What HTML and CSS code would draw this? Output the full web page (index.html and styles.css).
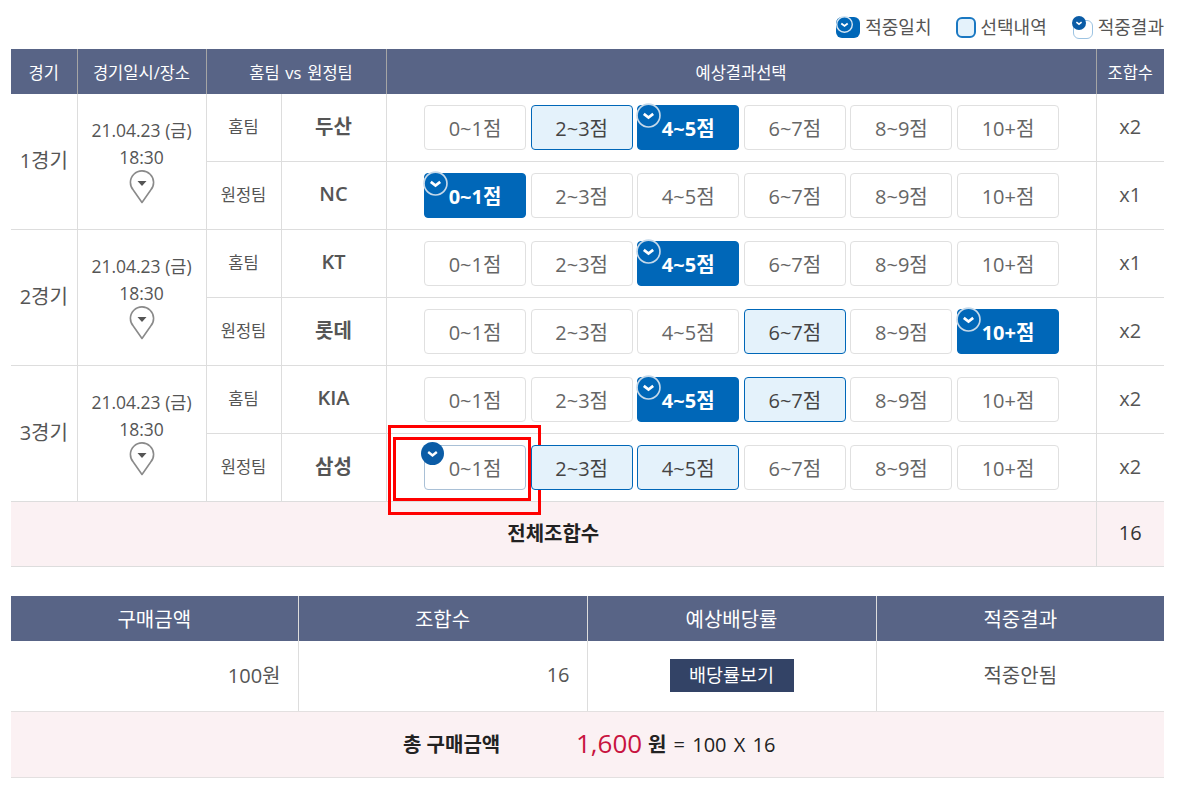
FILE: index.html
```html
<!DOCTYPE html>
<html lang="ko">
<head>
    <meta charset="UTF-8">
    <title>프로토 승부식</title>
    <link rel="stylesheet" href="styles.css">
</head>
<body>
    <div class="page">
        <div class="legend">
            <span class="legend-item"><i class="key key-match"><svg class="tick" viewBox="0 0 24 24"><circle cx="12" cy="12" r="11" fill="#0067b8" stroke="#d6e6f2" stroke-width="2"/><path d="M7.5 10.5l4.5 3.5 4.5-3.5" fill="none" stroke="#fff" stroke-width="2.6"/></svg></i>적중일치</span>
            <span class="legend-item"><i class="key key-pick"></i>선택내역</span>
            <span class="legend-item"><i class="key key-result"><svg class="tick" viewBox="0 0 24 24"><circle cx="12" cy="12" r="12" fill="#0b5ca6"/><path d="M7.5 10.5l4.5 3.5 4.5-3.5" fill="none" stroke="#fff" stroke-width="2.6"/></svg></i>적중결과</span>
        </div>

        <table class="game-table">
            <colgroup>
                <col class="c-game"><col class="c-date"><col class="c-side"><col class="c-team"><col class="c-pick"><col class="c-combo">
            </colgroup>
            <thead>
                <tr>
                    <th>경기</th>
                    <th>경기일시/장소</th>
                    <th colspan="2" class="th-teams">홈팀 vs 원정팀</th>
                    <th>예상결과선택</th>
                    <th>조합수</th>
                </tr>
            </thead>
            <tbody>
                <tr>
                    <td rowspan="2" class="game-no"><span>1경기</span></td>
                    <td rowspan="2" class="game-date">21.04.23 (금)<br>18:30<br><svg class="pin" viewBox="0 0 26 34"><path d="M13 32.5L4.6 20.5A11.6 11.6 0 1 1 21.4 20.5Z" fill="#fff" stroke="#8a8a8a" stroke-width="1.6" stroke-linejoin="round"/><path d="M8.5 11h9L13 16Z" fill="#555"/></svg></td>
                    <td class="side"><span>홈팀</span></td>
                    <td class="team"><span>두산</span></td>
                    <td class="picks"><div class="pick-row">
                        <span class="pick">0~1점</span><span class="pick chosen">2~3점</span><span class="pick hit">4~5점<svg class="tick" viewBox="0 0 24 24"><circle cx="12" cy="12" r="11" fill="#0067b8" stroke="#c5d9ea" stroke-width="1.6"/><path d="M7.5 10.5l4.5 3.5 4.5-3.5" fill="none" stroke="#fff" stroke-width="2.6"/></svg></span><span class="pick">6~7점</span><span class="pick">8~9점</span><span class="pick">10+점</span>
                    </div></td>
                    <td class="combo">x2</td>
                </tr>
                <tr class="group-end">
                    <td class="side"><span>원정팀</span></td>
                    <td class="team"><span>NC</span></td>
                    <td class="picks"><div class="pick-row">
                        <span class="pick hit">0~1점<svg class="tick" viewBox="0 0 24 24"><circle cx="12" cy="12" r="11" fill="#0067b8" stroke="#c5d9ea" stroke-width="1.6"/><path d="M7.5 10.5l4.5 3.5 4.5-3.5" fill="none" stroke="#fff" stroke-width="2.6"/></svg></span><span class="pick">2~3점</span><span class="pick">4~5점</span><span class="pick">6~7점</span><span class="pick">8~9점</span><span class="pick">10+점</span>
                    </div></td>
                    <td class="combo">x1</td>
                </tr>
                <tr>
                    <td rowspan="2" class="game-no"><span>2경기</span></td>
                    <td rowspan="2" class="game-date">21.04.23 (금)<br>18:30<br><svg class="pin" viewBox="0 0 26 34"><path d="M13 32.5L4.6 20.5A11.6 11.6 0 1 1 21.4 20.5Z" fill="#fff" stroke="#8a8a8a" stroke-width="1.6" stroke-linejoin="round"/><path d="M8.5 11h9L13 16Z" fill="#555"/></svg></td>
                    <td class="side"><span>홈팀</span></td>
                    <td class="team"><span>KT</span></td>
                    <td class="picks"><div class="pick-row">
                        <span class="pick">0~1점</span><span class="pick">2~3점</span><span class="pick hit">4~5점<svg class="tick" viewBox="0 0 24 24"><circle cx="12" cy="12" r="11" fill="#0067b8" stroke="#c5d9ea" stroke-width="1.6"/><path d="M7.5 10.5l4.5 3.5 4.5-3.5" fill="none" stroke="#fff" stroke-width="2.6"/></svg></span><span class="pick">6~7점</span><span class="pick">8~9점</span><span class="pick">10+점</span>
                    </div></td>
                    <td class="combo">x1</td>
                </tr>
                <tr class="group-end">
                    <td class="side"><span>원정팀</span></td>
                    <td class="team"><span>롯데</span></td>
                    <td class="picks"><div class="pick-row">
                        <span class="pick">0~1점</span><span class="pick">2~3점</span><span class="pick">4~5점</span><span class="pick chosen">6~7점</span><span class="pick">8~9점</span><span class="pick hit">10+점<svg class="tick" viewBox="0 0 24 24"><circle cx="12" cy="12" r="11" fill="#0067b8" stroke="#c5d9ea" stroke-width="1.6"/><path d="M7.5 10.5l4.5 3.5 4.5-3.5" fill="none" stroke="#fff" stroke-width="2.6"/></svg></span>
                    </div></td>
                    <td class="combo">x2</td>
                </tr>
                <tr>
                    <td rowspan="2" class="game-no"><span>3경기</span></td>
                    <td rowspan="2" class="game-date">21.04.23 (금)<br>18:30<br><svg class="pin" viewBox="0 0 26 34"><path d="M13 32.5L4.6 20.5A11.6 11.6 0 1 1 21.4 20.5Z" fill="#fff" stroke="#8a8a8a" stroke-width="1.6" stroke-linejoin="round"/><path d="M8.5 11h9L13 16Z" fill="#555"/></svg></td>
                    <td class="side"><span>홈팀</span></td>
                    <td class="team"><span>KIA</span></td>
                    <td class="picks"><div class="pick-row">
                        <span class="pick">0~1점</span><span class="pick">2~3점</span><span class="pick hit">4~5점<svg class="tick" viewBox="0 0 24 24"><circle cx="12" cy="12" r="11" fill="#0067b8" stroke="#c5d9ea" stroke-width="1.6"/><path d="M7.5 10.5l4.5 3.5 4.5-3.5" fill="none" stroke="#fff" stroke-width="2.6"/></svg></span><span class="pick chosen">6~7점</span><span class="pick">8~9점</span><span class="pick">10+점</span>
                    </div></td>
                    <td class="combo">x2</td>
                </tr>
                <tr class="group-end">
                    <td class="side"><span>원정팀</span></td>
                    <td class="team"><span>삼성</span></td>
                    <td class="picks"><div class="pick-row">
                        <span class="pick result">0~1점<svg class="tick tick-dark" viewBox="0 0 24 24"><circle cx="12" cy="12" r="12" fill="#0b5ca6"/><path d="M7.5 10.5l4.5 3.5 4.5-3.5" fill="none" stroke="#fff" stroke-width="2.6"/></svg><i class="mark mark-outer"></i><i class="mark mark-inner"></i></span><span class="pick chosen">2~3점</span><span class="pick chosen">4~5점</span><span class="pick">6~7점</span><span class="pick">8~9점</span><span class="pick">10+점</span>
                    </div></td>
                    <td class="combo">x2</td>
                </tr>
                <tr class="total-row">
                    <td colspan="5">전체조합수</td>
                    <td class="total-num">16</td>
                </tr>
            </tbody>
        </table>

        <table class="buy-table">
            <colgroup>
                <col class="c-buy"><col class="c-odds"><col class="c-odds"><col class="c-buy-end">
            </colgroup>
            <thead>
                <tr>
                    <th>구매금액</th>
                    <th>조합수</th>
                    <th>예상배당률</th>
                    <th>적중결과</th>
                </tr>
            </thead>
            <tbody>
                <tr>
                    <td class="num">100원</td>
                    <td class="num">16</td>
                    <td><span class="odds-btn">배당률보기</span></td>
                    <td>적중안됨</td>
                </tr>
                <tr class="buy-total">
                    <td colspan="4">
                        <div class="buy-sum">
                            <b class="sum-label">총 구매금액</b>
                            <span class="sum-price">1,600</span>
                            <span class="sum-calc"><b>원</b> = 100 X 16</span>
                        </div>
                    </td>
                </tr>
            </tbody>
        </table>
    </div>
</body>
</html>
```

FILE: styles.css
```css
body {
    margin: 0;
    background: #fff;
    color: #555;
    font-family: "Open Sans", "Noto Sans CJK KR", sans-serif;
}

.page {
    width: 1153px;
    padding-left: 11px;
}

.legend {
    display: flex;
    justify-content: flex-end;
    align-items: center;
    height: 49px;
    padding-top: 5px;
    box-sizing: border-box;
    gap: 24px;
    font-size: 18px;
    line-height: 22px;
    color: #555;
}

.legend-item {
    display: flex;
    align-items: center;
    gap: 5px;
}

.key {
    position: relative;
    display: block;
    height: 21px;
    box-sizing: border-box;
    border-radius: 6px;
}

.key .tick {
    left: 0;
    top: -1px;
    width: 17px;
    height: 17px;
}

.key-match {
    width: 24px;
    background: #0067b8;
}

.key-pick {
    width: 20px;
    background: #e4f2fb;
    border: 2px solid #1a78c2;
}

.key-result {
    width: 20px;
    height: 19px;
    margin-top: 4px;
    margin-left: 2px;
    background: #fff;
    border: 1px solid #9cc3e2;
}

.key-result .tick {
    left: -2px;
    top: -5px;
    width: 14px;
    height: 14px;
}

table {
    width: 1153px;
    border-collapse: collapse;
    table-layout: fixed;
}

.c-game { width: 66px; }
.c-date { width: 129px; }
.c-side { width: 75px; }
.c-team { width: 105px; }
.c-pick { width: 710px; }
.c-combo { width: 68px; }

.c-buy { width: 287px; }
.c-odds { width: 289px; }
.c-buy-end { width: 288px; }

.game-table th {
    height: 45px;
    padding: 0;
    background: #586486;
    color: #fff;
    font-size: 16.5px;
    font-weight: 400;
    border-left: 1px solid #a5a5a5;
}

.game-table th:first-child { border-left: 0; }

.game-table th.th-teams {
    padding-left: 10px;
    word-spacing: 1.5px;
}

.game-table td {
    height: 67px;
    padding: 0;
    text-align: center;
    border-left: 1px solid #ddd;
    border-bottom: 1px solid #ddd;
}

.game-table td.game-no,
.total-row td:first-child { border-left: 0; }

.game-no span {
    position: relative;
    top: -2px;
    font-size: 20px;
}

.game-table .game-date {
    font-size: 17.5px;
    line-height: 27px;
    padding-bottom: 2px;
}

.pin {
    display: block;
    width: 26px;
    height: 34px;
    margin: -1px auto 1px;
}

.game-table .side span {
    position: relative;
    top: -2px;
    font-size: 16.5px;
}

.game-table .team span {
    position: relative;
    top: -2px;
    font-size: 20px;
    font-weight: 600;
    color: #555;
}

.pick-row {
    display: flex;
    justify-content: center;
    gap: 4.6px;
    padding-left: 1px;
}

.pick {
    position: relative;
    width: 102px;
    height: 45px;
    box-sizing: border-box;
    border: 1px solid #e0e0e0;
    border-radius: 4px;
    background: #fff;
    font-size: 20px;
    line-height: 45px;
    color: #666;
}

.pick.chosen {
    background: #e4f2fb;
    border-color: #0067b8;
    color: #444;
}

.pick.hit {
    background: #0067b8;
    border-color: #0067b8;
    color: #fff;
    font-weight: 700;
}

.pick.result {
    border-color: #a9c0d6;
}

.tick {
    position: absolute;
    left: -2px;
    top: -3px;
    width: 25px;
    height: 25px;
}

.tick-dark {
    left: -4px;
    top: -4px;
    width: 23px;
    height: 23px;
}

/* red annotation boxes around the pick */
.mark {
    position: absolute;
    box-sizing: border-box;
    border: 3px solid #f00;
}

.mark-outer {
    left: -37px;
    top: -21px;
    width: 153px;
    height: 90px;
}

.mark-inner {
    left: -32px;
    top: -9px;
    width: 138px;
    height: 64px;
}

.game-table .combo {
    font-size: 20px;
    padding-bottom: 2px;
    height: 65px;
}

.game-table .total-row td {
    height: 65px;
    padding-bottom: 4px;
    background: #fbf1f3;
    font-size: 20px;
    font-weight: 700;
    color: #222;
    box-sizing: border-box;
}

.game-table .total-row .total-num {
    font-weight: 500;
    color: #333;
}

.buy-table {
    margin-top: 29px;
}

.buy-table th {
    height: 45px;
    padding: 0;
    background: #586486;
    color: #fff;
    font-size: 20px;
    font-weight: 400;
    border-left: 1px solid #ddd;
}

.buy-table th:first-child { border-left: 0; }

.buy-table td {
    height: 70px;
    padding: 0 0 2px;
    box-sizing: border-box;
    text-align: center;
    font-size: 20px;
    border-left: 1px solid #ddd;
    border-bottom: 1px solid #e3e0e0;
}

.buy-table td:first-child { border-left: 0; }

.buy-table td.num {
    text-align: right;
    padding-right: 17px;
}

.odds-btn {
    position: relative;
    top: 1px;
    display: inline-block;
    width: 124px;
    height: 33px;
    background: #334366;
    color: #fff;
    font-size: 18.5px;
    line-height: 31px;
    vertical-align: middle;
}

.buy-table .buy-total td {
    height: 66px;
    background: #fbf1f3;
}

.buy-sum {
    display: flex;
    align-items: center;
    padding-left: 392px;
    text-align: left;
    color: #222;
}

.sum-label {
    width: 173px;
    font-size: 20px;
}

.sum-price {
    width: 72px;
    font-size: 26px;
    color: #c8133f;
}

.sum-calc {
    font-size: 20px;
    font-weight: 500;
    word-spacing: 2px;
}
```
